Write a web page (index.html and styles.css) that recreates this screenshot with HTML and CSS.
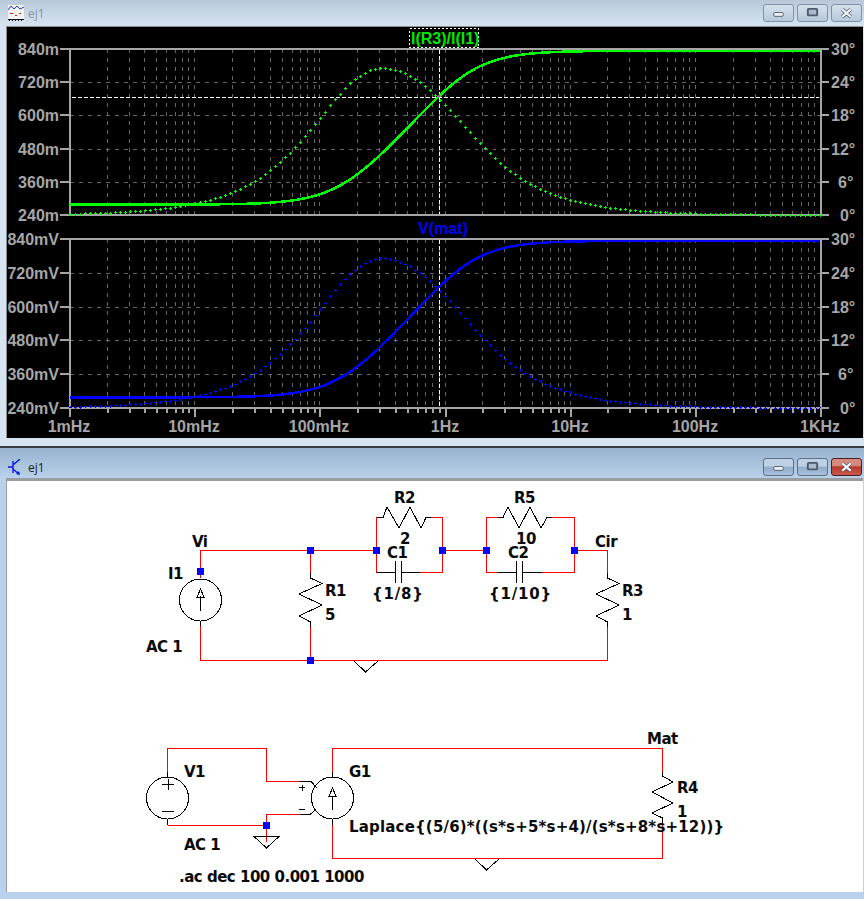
FILE: index.html
```html
<!DOCTYPE html>
<html lang="en">
<head>
  <meta charset="UTF-8">
  <title>ej1</title>
  <link rel="stylesheet" href="styles.css">
</head>
<body>
  <!-- waveform window -->
  <div class="window inactive">
    <div class="titlebar">
      <svg class="app-icon" viewBox="0 0 16 16" width="16" height="16">
        <rect x="0" y="0" width="16" height="14" fill="#f4f4f4"/>
        <polyline class="wave-line" points="0,5 3,1 6,4 9,1 12,4 16,2"/>
        <path class="wave-red" d="M2 8.5h3M7 10.5h2M11 8.5h2"/>
        <path class="wave-ruler" d="M0 14.5h16M1 15.5h1M4 15.5h1M7 15.5h1M10 15.5h1M13 15.5h1"/>
      </svg>
      <span class="title">ej1</span>
      <div class="buttons">
        <div class="btn"><svg viewBox="0 0 31 17" width="31" height="17"><rect class="g-min" x="10.5" y="7.5" width="10" height="4" rx="1"/></svg></div>
        <div class="btn"><svg viewBox="0 0 31 17" width="31" height="17"><rect class="g-max" x="10.5" y="3.5" width="10" height="7" rx="1"/></svg></div>
        <div class="btn"><svg viewBox="0 0 31 17" width="31" height="17"><path class="g-x-o" d="M11 4l9 8M20 4l-9 8"/><path class="g-x" d="M11 4l9 8M20 4l-9 8"/></svg></div>
      </div>
    </div>
    <div class="client plot-client">
      <svg id="plot" viewBox="7 27 855 411" width="855" height="411">
        <g id="plot-lines"></g>

        <rect class="trace-box" x="409.5" y="28.5" width="69" height="19"/>
        <text class="trace green" x="411" y="43.5">I(R3)/I(I1)</text>
        <text class="trace blue" x="418" y="233.5">V(mat)</text>

        <g class="ax left">
          <text x="59" y="55">840m</text>
          <text x="59" y="88">720m</text>
          <text x="59" y="121">600m</text>
          <text x="59" y="155">480m</text>
          <text x="59" y="188">360m</text>
          <text x="59" y="221">240m</text>
          <text x="59" y="245">840mV</text>
          <text x="59" y="279">720mV</text>
          <text x="59" y="313">600mV</text>
          <text x="59" y="346">480mV</text>
          <text x="59" y="380">360mV</text>
          <text x="59" y="414">240mV</text>
        </g>
        <g class="ax right">
          <text x="831" y="55">30°</text>
          <text x="831" y="88">24°</text>
          <text x="831" y="121">18°</text>
          <text x="831" y="155">12°</text>
          <text x="838" y="188">6°</text>
          <text x="840" y="221">0°</text>
          <text x="831" y="245">30°</text>
          <text x="831" y="279">24°</text>
          <text x="831" y="313">18°</text>
          <text x="831" y="346">12°</text>
          <text x="838" y="380">6°</text>
          <text x="840" y="414">0°</text>
        </g>
        <g class="ax bottom">
          <text x="69" y="432">1mHz</text>
          <text x="194" y="432">10mHz</text>
          <text x="319" y="432">100mHz</text>
          <text x="445" y="432">1Hz</text>
          <text x="570" y="432">10Hz</text>
          <text x="695" y="432">100Hz</text>
          <text x="820" y="432">1KHz</text>
        </g>
      </svg>
    </div>
  </div>

  <!-- schematic window -->
  <div class="window active">
    <div class="titlebar">
      <svg class="app-icon" viewBox="0 0 16 16" width="16" height="16">
        <path class="tr" d="M0 8h5M5 2v12M5 6l7-6M5 10l6 5"/>
        <path class="tr-head" d="M12 16l-4-1 3-3z"/>
      </svg>
      <span class="title">ej1</span>
      <div class="buttons">
        <div class="btn"><svg viewBox="0 0 31 17" width="31" height="17"><rect class="g-min" x="10.5" y="7.5" width="10" height="4" rx="1"/></svg></div>
        <div class="btn"><svg viewBox="0 0 31 17" width="31" height="17"><rect class="g-max" x="10.5" y="3.5" width="10" height="7" rx="1"/></svg></div>
        <div class="btn close"><svg viewBox="0 0 31 17" width="31" height="17"><path class="g-x-o" d="M11 4l9 8M20 4l-9 8"/><path class="g-x" d="M11 4l9 8M20 4l-9 8"/></svg></div>
      </div>
    </div>
    <div class="client">
      <svg id="schematic" viewBox="7 481 856 411" width="856" height="411">
        <!-- wires -->
        <g class="wire">
          <path d="M200.5 578V550.5H376.5M442.5 550.5H486.5M574.5 550.5H607.5V573M607.5 627V660.5H200.5V626"/>
          <path d="M310.5 550.5V573M310.5 627V660.5"/>
          <path d="M383 517.5H376.5V572.5H377M431 517.5H442.5V572.5H420"/>
          <path d="M498 517.5H486.5V572.5H498M552 517.5H574.5V572.5H542"/>
          <path d="M167.5 772V748.5H266.5V781.5H300M300 814.5H266.5V842"/>
          <path d="M167.5 825.5H266.5"/>
          <path d="M332.5 772V748.5H662.5V772M662.5 825V858.5H332.5V825"/>
        </g>

        <!-- parts -->
        <g class="part">
          <circle cx="200.5" cy="600" r="21"/>
          <path d="M200.5 611V596M200.5 589l-3.5 8h7z"/>
          <path d="M200.5 621V626"/>
          <path d="M310.5 573V578L322 583.500L299 594L322 605L299 616L310.5 622V627"/>
          <path d="M607.5 573V578L619 583.500L596 594L619 605L596 616L607.5 622V627"/>
          <path d="M377 517.5H383L387 507L399 528L410 507L421 528L426 517.5H431"/>
          <path d="M498 517.5H503L508 507L519 528L530 507L541 528L547 517.5H552"/>
          <path d="M377 572.5H395M420 572.5H401M395.500 561V583M401.500 561V583"/>
          <path d="M498 572.5H516M542 572.5H522M516.500 561V583M522.500 561V583"/>
          <path d="M354 661L365.500 672L378 661"/>
          <path d="M475 859L486.500 870L499 859"/>

          <circle cx="167.5" cy="798" r="21"/>
          <path d="M167.5 772V777M167.5 819V825M162 784.5H174M168.5 779V790M162 811.5H174"/>
          <circle cx="332.5" cy="798" r="21"/>
          <path d="M332.5 810V796M332.5 788l-3.5 8h7z"/>
          <path d="M332.5 772V777M332.5 819V825"/>
          <path d="M300 781.5H311L317 788M300 814.5H310L315.500 810"/>
          <path d="M299 787.5H305M302.500 785V791M299 809.500H305"/>
          <path d="M254 836.5H279L266.500 848Z"/>
          <path d="M662.5 772V776L673 782L652 792L673 803L652 813L662.5 818V825"/>
        </g>

        <!-- junctions -->
        <g class="dot">
          <rect x="197" y="568" width="7" height="7"/>
          <rect x="307" y="547" width="7" height="7"/>
          <rect x="373" y="547" width="7" height="7"/>
          <rect x="439" y="547" width="7" height="7"/>
          <rect x="483" y="547" width="7" height="7"/>
          <rect x="571" y="547" width="7" height="7"/>
          <rect x="307" y="657" width="7" height="7"/>
          <rect x="263" y="822" width="7" height="7"/>
        </g>

        <!-- labels -->
        <g class="lbl">
          <text x="192" y="547">Vi</text>
          <text x="168" y="579">I1</text>
          <text x="146" y="652">AC 1</text>
          <text x="325" y="596">R1</text>
          <text x="325" y="620">5</text>
          <text x="394" y="503">R2</text>
          <text x="400" y="544">2</text>
          <text x="387" y="558">C1</text>
          <text class="wide" x="372" y="599">{1/8}</text>
          <text x="514" y="503">R5</text>
          <text x="516" y="544">10</text>
          <text x="508" y="558">C2</text>
          <text class="wide" x="489" y="599">{1/10}</text>
          <text x="595" y="547">Cir</text>
          <text x="622" y="596">R3</text>
          <text x="622" y="620">1</text>
          <text x="184" y="777">V1</text>
          <text x="349" y="777">G1</text>
          <text x="184" y="850">AC 1</text>
          <text class="formula" x="349" y="832">Laplace{(5/6)*((s*s+5*s+4)/(s*s+8*s+12))}</text>
          <text x="179" y="882">.ac dec 100 0.001 1000</text>
          <text x="647" y="744">Mat</text>
          <text x="677" y="793">R4</text>
          <text x="677" y="817">1</text>
        </g>
      </svg>
    </div>
  </div>

  <script src="plot.js"></script>
</body>
</html>
```

FILE: styles.css
```css
* {
  box-sizing: border-box;
}

html, body {
  margin: 0;
  padding: 0;
  width: 864px;
  height: 899px;
  overflow: hidden;
  background: #b9d1ea;
}

.window {
  display: flex;
  flex-direction: column;
}

.inactive {
  height: 448px;
  background: #d6e4f2;
  border-bottom: 2px solid #3a3d40;
}

.active {
  height: 451px;
  background: #b9d1ea;
}

.titlebar {
  display: flex;
  align-items: center;
  padding-left: 8px;
  padding-right: 2px;
}

.inactive .titlebar {
  height: 26px;
  background: linear-gradient(#b8c8d8, #d6e4f2);
}

.active .titlebar {
  height: 30px;
  padding-top: 8px;
  background: linear-gradient(#98b3cf, #b9d1ea);
}

.app-icon {
  flex: none;
  margin-right: 4px;
}

.title {
  font-family: "Open Sans", sans-serif;
  font-size: 12px;
}

.inactive .title {
  color: #8d949b;
}

.active .title {
  color: #1c1c1c;
}

.buttons {
  margin-left: auto;
  display: flex;
  gap: 3px;
}

.btn {
  width: 31px;
  height: 18px;
  border: 1px solid #7f92a8;
  border-radius: 3px;
  background: linear-gradient(#d5e0ec, #b7c7d9);
  display: flex;
  align-items: center;
  justify-content: center;
}

.active .btn {
  border-color: #5c708a;
  background: linear-gradient(#bdd0e4 45%, #92acc8 50%, #a9c0d9);
}

.active .btn.close {
  border-color: #4a1f24;
  background: linear-gradient(#d58a7e 40%, #b8392c 50%, #c9584a);
}

.g-min, .g-max {
  fill: #f2f5f8;
  stroke: #4c5a6c;
}

.g-max {
  fill: #a9bbcf;
  stroke-width: 2;
}

.g-x-o {
  fill: none;
  stroke: #4c5a6c;
  stroke-width: 4;
}

.g-x {
  fill: none;
  stroke: #f5f7f9;
  stroke-width: 2.4;
}

.wave-line {
  fill: none;
  stroke: #1a2fd0;
}

.wave-red {
  fill: none;
  stroke: #d8261c;
}

.wave-ruler {
  fill: none;
  stroke: #111;
  shape-rendering: crispEdges;
}

.tr {
  fill: none;
  stroke: #0a18e0;
  stroke-width: 1.4;
}

.tr-head {
  fill: #0a18e0;
}

.client {
  margin-left: 6px;
  margin-right: 1px;
  display: flex;
}

.inactive .client {
  height: 412px;
  margin-right: 1px;
  border: 1px solid #8c8f92;
  border-width: 1px 0 0 1px;
  background: #000;
}

.active .client {
  height: 414px;
  border: 1px solid #9a9da0;
  border-width: 3px 0 0 1px;
  background: #fff;
}

#plot, #schematic {
  display: block;
  flex: none;
}

/* plot */
.frame {
  fill: none;
  stroke: #a5a5a5;
  stroke-width: 2;
  shape-rendering: crispEdges;
}

.grid {
  fill: none;
  stroke: #666;
  stroke-dasharray: 4 5;
  shape-rendering: crispEdges;
}

.cursor {
  fill: none;
  stroke: #fff;
  stroke-dasharray: 4 2;
  shape-rendering: crispEdges;
}

.mag {
  fill: none;
  stroke-width: 2.5;
  shape-rendering: crispEdges;
}

.phase {
  fill: none;
  stroke-width: 1.4;
  shape-rendering: crispEdges;
}

.c-green {
  stroke: #00ff00;
}

.c-blue {
  stroke: #0000ff;
}

.mark {
  fill: #ff00ff;
}

.trace {
  font-family: "Liberation Sans", sans-serif;
  font-size: 16px;
  font-weight: bold;
}

.trace.green {
  fill: #00e800;
}

.trace.blue {
  fill: #0000ff;
}

.trace-box {
  fill: #000;
  stroke: #fff;
  stroke-dasharray: 2 2;
  shape-rendering: crispEdges;
}

.ax text {
  font-family: "Liberation Sans", sans-serif;
  font-size: 16px;
  font-weight: bold;
  fill: #a6a6a6;
}

.ax.left text {
  text-anchor: end;
}

.ax.bottom text {
  text-anchor: middle;
}

/* schematic */
.wire {
  fill: none;
  stroke: #ff0000;
  shape-rendering: crispEdges;
}

.part {
  fill: none;
  stroke: #000;
  shape-rendering: crispEdges;
}

.dot {
  fill: #0000ff;
}

.lbl text {
  font-family: "DejaVu Sans", sans-serif;
  font-size: 15px;
  font-weight: bold;
  letter-spacing: -0.5px;
  fill: #0a0a0a;
}

.lbl .wide {
  letter-spacing: 0.8px;
}

.lbl .formula {
  letter-spacing: 0.18px;
}
```

FILE: plot.js
```js
// draws grid, axes and the two bode traces into #plot
const NS = "http://www.w3.org/2000/svg";
const layer = document.getElementById("plot-lines");

const LEFT = 69.5;
const RIGHT = 820.5;
const DECADE = (RIGHT - LEFT) / 6;
const panes = [
  { top: 49, bottom: 215, rows: [82, 115, 149, 182], color: "c-green" },
  { top: 239, bottom: 408, rows: [273, 307, 340, 374], color: "c-blue" }
];

function add(cls, d) {
  const path = document.createElementNS(NS, "path");
  path.setAttribute("class", cls);
  path.setAttribute("d", d);
  layer.appendChild(path);
}

// H(s) = (5/6)(s+1)(s+4)/((s+2)(s+6))
function response(x) {
  const w = 2 * Math.PI * Math.pow(10, (x - LEFT) / DECADE - 3);
  const mag = (5 / 6) * Math.sqrt((w * w + 1) * (w * w + 16) / ((w * w + 4) * (w * w + 36)));
  const ph = Math.atan(w) + Math.atan(w / 4) - Math.atan(w / 2) - Math.atan(w / 6);
  return { mag, ph: ph * 180 / Math.PI };
}

panes.forEach((pane, i) => {
  const h = pane.bottom - pane.top;
  let grid = "";
  pane.rows.forEach(y => { grid += `M${LEFT} ${y + 0.5}H${RIGHT}`; });
  for (let d = 0; d < 6; d++) {
    for (let k = 2; k <= 10; k++) {
      const x = Math.floor(LEFT + (d + Math.log10(k)) * DECADE) + 0.5;
      grid += `M${x} ${pane.top}V${pane.bottom}`;
    }
  }
  add("grid", grid);

  let frame = `M${LEFT} ${pane.top}H${RIGHT}V${pane.bottom}H${LEFT}Z`;
  [pane.top, ...pane.rows, pane.bottom].forEach(y => {
    frame += `M60 ${y}H${LEFT}M${RIGHT} ${y}H829`;
  });
  add("frame", frame);

  // cursor
  let cursor = `M439.5 ${pane.top + 1}V${pane.bottom - 1}`;
  if (i === 0) cursor += "M72 97.5H819";
  add("cursor", cursor);

  let mag = "";
  let phase = "";
  for (let x = LEFT; x <= RIGHT; x += 1.5) {
    const r = response(x);
    const y = pane.bottom - (r.mag - 0.24) / 0.6 * h;
    mag += `${mag ? "L" : "M"}${x.toFixed(1)} ${y.toFixed(1)}`;
  }
  for (let x = LEFT; x <= RIGHT; x += 5) {
    const r = response(x);
    const y = Math.round(pane.bottom - r.ph / 30 * h);
    const px = Math.round(x);
    phase += `M${px - 1} ${y + 0.5}h3M${px + 0.5} ${y - 1}v3`;
  }
  add(`mag ${pane.color}`, mag);
  add(`phase ${pane.color}`, phase);
});

// frequency ticks under the lower pane
let ticks = "";
for (let d = 0; d < 6; d++) {
  for (let k = 1; k <= 10; k++) {
    const x = Math.floor(LEFT + (d + Math.log10(k)) * DECADE) + 0.5;
    ticks += `M${x} 408V${k === 1 || k === 10 ? 417 : 413}`;
  }
}
add("frame", ticks);

const marker = document.createElementNS(NS, "rect");
marker.setAttribute("class", "mark");
marker.setAttribute("x", 438);
marker.setAttribute("y", 95);
marker.setAttribute("width", 2);
marker.setAttribute("height", 2);
layer.appendChild(marker);
```
